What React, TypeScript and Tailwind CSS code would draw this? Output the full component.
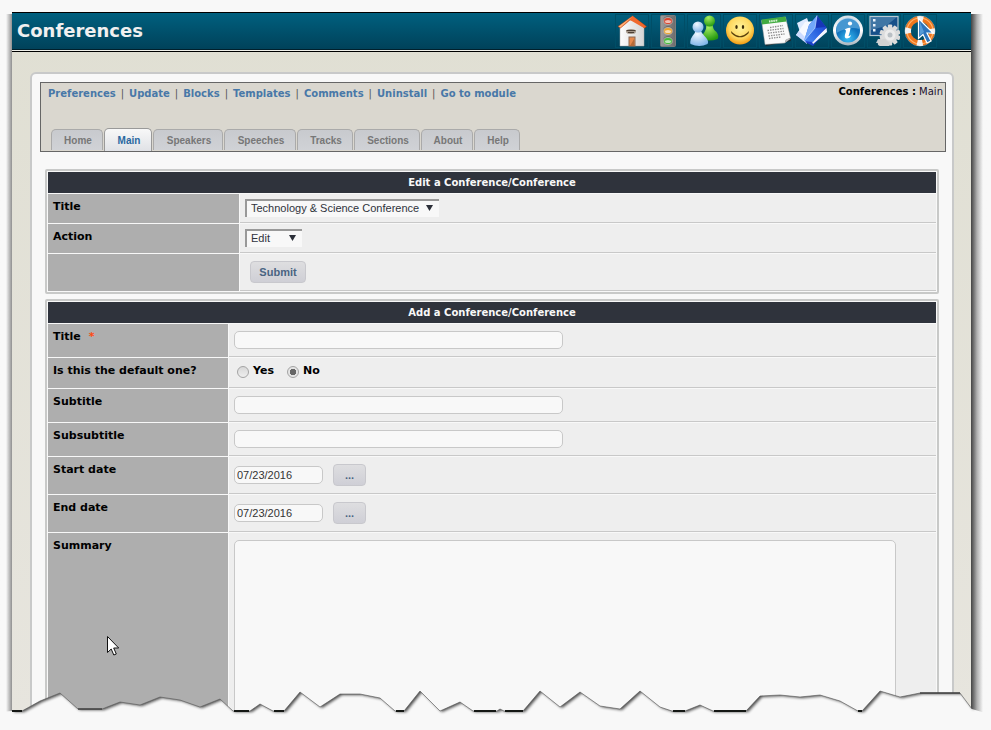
import React from "react";

const tabs = [
  ["Home", "w-[52px]"],
  ["Main", "w-[48px]"],
  ["Speakers", "w-[70px]"],
  ["Speeches", "w-[72px]"],
  ["Tracks", "w-[56px]"],
  ["Sections", "w-[66px]"],
  ["About", "w-[52px]"],
  ["Help", "w-[46px]"],
];
const adminLinks = ["Preferences", "Update", "Blocks", "Templates", "Comments", "Uninstall", "Go to module"];

function HomeIcon() {
  return (
    <svg width="32" height="32" viewBox="0 0 32 32">
      <defs>
        <linearGradient id="roof" x1="0" y1="0" x2="1" y2="1">
          <stop offset="0" stopColor="#ff9a55" />
          <stop offset=".5" stopColor="#ee5b1e" />
          <stop offset="1" stopColor="#c83c08" />
        </linearGradient>
        <linearGradient id="wall" x1="0" y1="0" x2="1" y2="0">
          <stop offset="0" stopColor="#fdfdfd" />
          <stop offset="1" stopColor="#d5d5d5" />
        </linearGradient>
      </defs>
      <path d="M4 12 14 3l14 9v19H4z" fill="url(#wall)" stroke="#aaa" strokeWidth=".5" />
      <path d="M16.500 1 2 11.500l2.500 1.500L14 5l4 0 10.500 8 2-1.500z" fill="url(#roof)" stroke="#b8400f" strokeWidth=".5" />
      <path d="M16.500 1 14 5l14 8 2-1.500z" fill="#f0692d" />
      <path d="M16.500 1.500 2.500 11.500l2 1z" fill="#ffb47c" />
      <ellipse cx="15" cy="16.500" rx="5" ry="2.500" fill="#a49789" />
      <path d="M10.500 15.500h9M12 17.500h6" stroke="#4d4036" strokeWidth="1" />
      <rect x="13" y="22" width="6" height="9" fill="#e6894c" stroke="#8b6a55" />
      <path d="M14 31l4-7v7z" fill="#b56b38" />
    </svg>
  );
}

function TrafficIcon() {
  return (
    <svg width="32" height="32" viewBox="0 0 32 32">
      <defs>
        <linearGradient id="post">
          <stop offset="0" stopColor="#9c9c9c" />
          <stop offset=".5" stopColor="#868686" />
          <stop offset="1" stopColor="#6b6b6b" />
        </linearGradient>
      </defs>
      <rect x="8.500" y=".5" width="15" height="31" rx="1" fill="url(#post)" stroke="#7c7c7c" />
      {[
        ["#d9452c", 5.5],
        ["#eda32c", 15.5],
        ["#46bb38", 25.5],
      ].map(([c, y]) => (
        <g key={c}>
          <ellipse cx="16" cy={y} rx="4.800" ry="4.200" fill="#626262" />
          <ellipse cx="16" cy={Number(y) + 0.5} rx="4.300" ry="3.500" fill={c as string} stroke="#c9c9c9" strokeWidth=".7" />
          <ellipse cx="16" cy={Number(y) + 1} rx="3" ry="1.500" fill="#fff" opacity=".65" />
        </g>
      ))}
    </svg>
  );
}

function UsersIcon() {
  return (
    <svg width="32" height="32" viewBox="0 0 32 32">
      <defs>
        <radialGradient id="green" cx=".4" cy=".2" r=".8">
          <stop offset="0" stopColor="#a5ee62" />
          <stop offset="1" stopColor="#259a0f" />
        </radialGradient>
        <radialGradient id="blue" cx=".4" cy=".25" r=".8">
          <stop offset="0" stopColor="#f1f9ff" />
          <stop offset="1" stopColor="#7cb2e8" />
        </radialGradient>
      </defs>
      <path d="M18.500 9h6q0 5 4 8 3 4 1 7-8 3-16 0 0-4 3-7 2-3 2-8z" fill="url(#green)" />
      <circle cx="21.500" cy="6" r="5.500" fill="url(#green)" />
      <path d="M7.500 15h5q1 3 4 6 5 5 3 8-8 4-17 0-1-4 2-8 3-3 3-6z" fill="url(#blue)" />
      <circle cx="10" cy="12" r="5.500" fill="url(#blue)" />
    </svg>
  );
}

function SmileIcon() {
  return (
    <svg width="32" height="32" viewBox="0 0 32 32">
      <defs>
        <radialGradient id="face" cx=".5" cy=".4" r=".6">
          <stop offset="0" stopColor="#fff39b" />
          <stop offset=".65" stopColor="#fed85e" />
          <stop offset="1" stopColor="#f39a12" />
        </radialGradient>
      </defs>
      <circle cx="16" cy="15.500" r="14" fill="url(#face)" />
      <ellipse cx="12.500" cy="12" rx="1.200" ry="2" fill="#3c2c0a" />
      <ellipse cx="19" cy="12" rx="1.200" ry="2" fill="#3c2c0a" />
      <path d="M8 18q8 7.500 16 0M7.500 17l1.500 2M24.500 17 23 19" fill="none" stroke="#59400c" strokeWidth="1.100" strokeLinecap="round" />
    </svg>
  );
}

function CalendarIcon() {
  return (
    <svg width="32" height="32" viewBox="0 0 32 32">
      <path d="m3 9 3 22 25-5-3-16z" fill="#222" opacity=".8" />
      <path d="m1.500 5.500 24-3.500L30.500 23 26 25 25 28 5 29.500z" fill="#fafafa" stroke="#999" strokeWidth=".5" />
      <path d="m1.500 4.500 24-3 1 5-24.500 3z" fill="#42ab41" />
      <path d="M9 6.500l9-1.200" stroke="#d9f4d4" strokeWidth="2" strokeDasharray="1.500 .7" />
      <path d="M10 12.500l13-2M7.500 15.500l16-2M8 18.200l16-2M8.500 21l16-2M9 23.500l12-1.500" stroke="#8d8d8d" strokeWidth="1.300" strokeDasharray="1.500 1" />
      <path d="M25 28l1-4 5-.5z" fill="#bbb" />
    </svg>
  );
}

function BookIcon() {
  return (
    <svg width="32" height="32" viewBox="0 0 32 32">
      <defs>
        <linearGradient id="cover" x1="0" y1="1" x2="1" y2="0">
          <stop offset="0" stopColor="#4d8df5" />
          <stop offset=".5" stopColor="#2a62e0" />
          <stop offset="1" stopColor="#1a3fd0" />
        </linearGradient>
      </defs>
      <path d="M1 8 11 3l5 14-9 9z" fill="#dfeaff" />
      <path d="M0 20 9 7l9-1-8 21z" fill="#f6f9ff" />
      <path d="M0 20l3-4 8 8 0 5z" fill="#ccdcff" />
      <path d="M9 27 30 11l1 4-14 16z" fill="#1c3fc8" />
      <path d="M16 26.500 30.500 13l.5 4-14 12z" fill="#f4f6ff" />
      <path d="M8 26 13 10 21 .5 30 12 17 27z" fill="url(#cover)" />
      <path d="M21 .5 19 13l11-1z" fill="#1736b8" />
      <path d="M21 .5 13 10 8 26l11-13z" fill="#72a8fa" />
      <path d="M21 .5 19 13 8 26" fill="none" stroke="#c1d8ff" strokeWidth=".7" />
    </svg>
  );
}

function InfoIcon() {
  return (
    <svg width="32" height="32" viewBox="0 0 32 32">
      <defs>
        <linearGradient id="ring" x1="0" y1="0" x2="0" y2="1">
          <stop offset="0" stopColor="#d5dde4" />
          <stop offset=".5" stopColor="#ffffff" />
          <stop offset="1" stopColor="#a7b3bd" />
        </linearGradient>
        <radialGradient id="disc" cx=".5" cy=".85">
          <stop offset="0" stopColor="#39bdf4" />
          <stop offset="1" stopColor="#0e6fbb" />
        </radialGradient>
      </defs>
      <circle cx="16" cy="15.500" r="15" fill="url(#ring)" />
      <circle cx="16" cy="15.500" r="12" fill="url(#disc)" />
      <path d="M4.500 14a11.500 11.500 0 0 1 23 0q-11-3-23 4z" fill="#8fc8ee" opacity=".45" />
      <circle cx="18" cy="8.500" r="2.100" fill="#fff" />
      <path d="M12.500 14.500q4-2.500 6-1.500-.5 4-2 8 1 .5 2.500-1-.5 3-4 3.500-3 0-2-4 1.500-4 .5-4.500z" fill="#fff" />
    </svg>
  );
}

function SystemIcon() {
  const teeth = [0, 36, 72, 108, 144, 180, 216, 252, 288, 324];
  return (
    <svg width="32" height="32" viewBox="0 0 32 32">
      <path d="M10 24h7l2 4H8z" fill="#c5ccd1" />
      <rect x="2" y="1.500" width="28" height="19" fill="#17508a" stroke="#b8c8d2" strokeWidth="1.200" />
      <path d="M3 2h26L18 11 3 15z" fill="#5c90b8" opacity=".6" />
      <path d="M5 4h2.500v2.500H5zM5 9h2.500v2.500H5zM5 14h2.500v2.500H5z" fill="#e9f2fb" />
      <g fill="#dcdcdc">
        {teeth.map((a) => (
          <rect key={a} x="19.800" y="9.500" width="4.400" height="5" rx="1" transform={`rotate(${a} 22 20)`} />
        ))}
        <circle cx="22" cy="20" r="8" />
      </g>
      <circle cx="22" cy="20" r="5.500" fill="#ececec" />
      <circle cx="22" cy="20" r="2.500" fill="#b9bfc4" />
      <path d="M10 27q1-4 4-2 3-3 5 1 4 1 2 5h-9q-3-1-2-4z" fill="#d2d2d2" />
    </svg>
  );
}

function HelpIcon() {
  return (
    <svg width="32" height="32" viewBox="0 0 32 32">
      <circle cx="16" cy="16" r="15" fill="none" stroke="#93a9b2" strokeWidth=".7" />
      <circle cx="16" cy="16" r="12" fill="none" stroke="#ef761d" strokeWidth="5.500" />
      <circle cx="16" cy="16" r="13" fill="none" stroke="#ffb26a" strokeWidth="1.200" />
      <circle cx="16" cy="16" r="12" fill="none" stroke="#eff2f4" strokeWidth="6" strokeDasharray="5.500 13.350" strokeDashoffset="2.750" />
      <path d="M14.500 3.500v20l4.500-4 4 8.500 4-2-4-8h6z" fill="#2d74bd" stroke="#fff" strokeWidth="1.200" />
      <path d="M16 7v13l4-3z" fill="#72b5e8" opacity=".6" />
    </svg>
  );
}

const toolbar = [
  ["Home page", HomeIcon],
  ["Status", TrafficIcon],
  ["Users", UsersIcon],
  ["Smilies", SmileIcon],
  ["Calendar", CalendarIcon],
  ["Documents", BookIcon],
  ["Information", InfoIcon],
  ["System", SystemIcon],
  ["Help", HelpIcon],
] as const;

const tear =
  "12,26 22,26 40,16 60,8 78,24 102,24 120,17 140,20 160,12 180,15 200,22 220,14 233,26 250,26 260,19 273,26 284,26 300,7 320,22 340,9 360,9 380,13 395,26 404,26 420,6 440,26 460,17 473,26 497,26 500,24 504,26 523,26 540,6 560,22 580,7 600,21 620,24 640,6 660,22 672,26 685,26 700,20 713,26 746,26 760,11 780,10 800,12 820,10 840,16 858,26 862,26 880,6 900,12 920,8 960,8 972,24";

function TornEdge() {
  return (
    <svg className="pointer-events-none absolute top-[685px] left-0 h-[45px] w-full" viewBox="0 0 991 45" preserveAspectRatio="none" aria-hidden="true">
      <defs>
        <clipPath id="below">
          <polygon points={`0,26 ${tear} 980,26 991,26 991,45 0,45`} />
        </clipPath>
        <filter id="soft" x="-5%" y="-50%" width="110%" height="200%">
          <feGaussianBlur stdDeviation="1.500" />
        </filter>
      </defs>
      <polygon points={`0,27 ${tear} 982,27 991,27 991,45 0,45`} fill="#f8f8f8" />
      <g clipPath="url(#below)">
        <polygon points={`12,-10 ${tear} 972,-10`} fill="#000" opacity=".7" filter="url(#soft)" transform="translate(2 1)" />
      </g>
      <polyline points={tear} fill="none" stroke="#555" strokeOpacity=".6" strokeWidth="1" />
      <path d="M12 26h10M234 26h15M274 26h10M396 26h8M474 26h22M505 26h18M673 26h12M714 26h32M858 26h4" stroke="#151815" strokeWidth="2" />
      <path d="M78 24h24M920 8h40" stroke="#444" strokeWidth="1.500" />
    </svg>
  );
}

const button =
  "h-[22px] rounded border border-[#c8c8cd] bg-linear-to-b from-[#dedee0] to-[#cfcfd6] font-['Liberation_Sans',Arial,sans-serif] text-[11px] font-bold text-[#4a6482]";
const field =
  "block h-[18px] rounded-[5px] border border-[#c8c8c8] bg-[#f8f8f8] px-[2px] font-['Liberation_Sans',Arial,sans-serif] text-[11px] text-[#333]";

function FormTable({ title, labelWidth, children }: { title: string; labelWidth: string; children: React.ReactNode }) {
  return (
    <table className="w-full table-fixed border-separate border-spacing-px rounded-[2px] border-2 border-[#c8c9c8]">
      <colgroup>
        <col className={labelWidth} />
        <col />
      </colgroup>
      <thead>
        <tr>
          <th colSpan={2} className="h-[21px] bg-[#2f333c] p-0 text-center text-[10px] leading-[14px] font-bold text-[#f8f8f8]">
            {title}
          </th>
        </tr>
      </thead>
      <tbody>{children}</tbody>
    </table>
  );
}

function Row({ label, htmlFor, required, height, top, children }: { label?: string; htmlFor?: string; required?: boolean; height: string; top: string; children: React.ReactNode }) {
  return (
    <tr className={height}>
      <th className="bg-[#aeaeae] px-[5px] pt-[6px] pb-0 text-left align-top leading-[14px] font-bold text-black">
        {label && (
          <label htmlFor={htmlFor}>
            {label}
            {required && <span className="ml-2 text-[#ff4a10]">*</span>}
          </label>
        )}
      </th>
      <td className={`border-b border-[#c8c8c8] bg-[#eee] px-[5px] pb-0 align-top ${top}`}>{children}</td>
    </tr>
  );
}

function Select({ id, options, width }: { id: string; options: string[]; width: string }) {
  return (
    <div className={`relative ${width}`}>
      <select id={id} className="block h-[18px] w-full appearance-none border-t-2 border-l-2 border-[#999] bg-[#f8f8f8] pb-[2px] pl-1 font-['Liberation_Sans',Arial,sans-serif] text-[11px] leading-[14px] text-[#2f333c]">
        {options.map((o) => (
          <option key={o}>{o}</option>
        ))}
      </select>
      <svg className="pointer-events-none absolute top-[6px] right-[6px]" width="7" height="6" viewBox="0 0 7 6" aria-hidden="true">
        <path d="M0 0h7L3.500 6z" fill="#2b2f38" />
      </svg>
    </div>
  );
}

function Radio({ id, label, checked }: { id: string; label: string; checked?: boolean }) {
  return (
    <span className="flex items-center gap-1">
      <input
        id={id}
        type="radio"
        name="isdefault"
        defaultChecked={checked}
        className="mt-[3px] h-3 w-3 appearance-none rounded-full border border-[#a4a4a4] bg-linear-to-b from-[#d8d8d8] to-[#eee] checked:bg-[radial-gradient(circle,#666_0_3px,#e4e4e4_3px)]"
      />
      <label htmlFor={id} className="leading-[14px] font-bold text-black">{label}</label>
    </span>
  );
}

function DateField({ id }: { id: string }) {
  return (
    <div className="flex items-center gap-[10px]">
      <input id={id} type="text" defaultValue="07/23/2016" className={`${field} w-[89px]`} />
      <button type="button" className={`${button} w-[33px]`}>...</button>
    </div>
  );
}

export default function App() {
  return (
    <div className="relative h-screen max-h-[730px] overflow-hidden bg-[#f8f8f8] pt-3 font-['DejaVu_Sans',Verdana,sans-serif] text-[11px]">
      <div className="flex h-[700px]">
        <div className="mt-[2px] w-3 shrink-0 bg-linear-to-r from-[#f8f8f8] from-50% to-[#909090]" />
        <div className="min-w-0 flex-1 bg-linear-to-b from-[#e0dfd3] to-[#e7e5de]">
          <header className="flex h-[38px] items-center justify-between border-y border-t-black border-b-[#00202c] bg-linear-to-b from-[#00607f] to-[#00425a] pr-[34px] pl-[5px]">
            <h1 className="text-[18px] leading-6 font-bold text-[#f0f0f0]">Conferences</h1>
            <nav className="flex gap-[2px]">
              {toolbar.map(([label, Icon]) => (
                <a key={label} href="#" aria-label={label} className="border border-[#004e67]">
                  <Icon />
                </a>
              ))}
            </nav>
          </header>
          <div className="h-[2px] border-b border-black bg-[#f0f0ea]" />
          <main className="mt-5 mr-[17px] ml-[18px] rounded-md border-2 border-[#c8c9c9] bg-[#f8f8f8] pt-2">
            <div className="mr-[6px] ml-2 flex h-[70px] flex-col justify-between border border-[#666] bg-[#dad7cf]">
              <div className="flex justify-between pt-[2px] pr-[2px] pl-[7px] text-[10px] leading-[14px]">
                <div className="flex gap-[5px] pt-[2px] font-bold text-[#4878a8]">
                  {adminLinks.map((link, i) => (
                    <React.Fragment key={link}>
                      {i > 0 && <span className="font-normal text-[#555]">|</span>}
                      <a href="#">{link}</a>
                    </React.Fragment>
                  ))}
                </div>
                <div className="text-[#201030]">
                  <b className="text-black">Conferences :</b> Main
                </div>
              </div>
              <nav className="flex items-end gap-px pl-[10px] text-center font-['Liberation_Sans',Arial,sans-serif] text-[10px] font-bold">
                {tabs.map(([tab, width]) =>
                  tab === "Main" ? (
                    <a key={tab} href="#" className={`${width} h-[23px] rounded-t-[5px] border border-b-0 border-[#999] bg-linear-to-b from-[#f8f8f8] to-[#e0e2e6] pl-[2px] leading-[24px] text-[#2a68a0]`}>{tab}</a>
                  ) : (
                    <a key={tab} href="#" className={`${width} mb-px h-[21px] rounded-t-[5px] border border-b-0 border-[#aaa] bg-linear-to-b from-[#c8cace] to-[#d0d2d6] pl-[2px] leading-[22px] text-[#777]`}>{tab}</a>
                  )
                )}
              </nav>
            </div>
            <div className="mx-[13px] mt-[17px] flex flex-col gap-[5px]">
              <FormTable title="Edit a Conference/Conference" labelWidth="w-[191px]">
                <Row label="Title" htmlFor="conference" height="h-[29px]" top="pt-[5px]">
                  <Select id="conference" width="w-[194px]" options={["Technology & Science Conference"]} />
                </Row>
                <Row label="Action" htmlFor="action" height="h-[29px]" top="pt-[5px]">
                  <Select id="action" width="w-[57px]" options={["Edit", "Delete"]} />
                </Row>
                <Row height="h-[37px]" top="pt-[7px]">
                  <button type="submit" className={`${button} ml-[5px] block w-14`}>Submit</button>
                </Row>
              </FormTable>
              <FormTable title="Add a Conference/Conference" labelWidth="w-[180px]">
                <Row label="Title" htmlFor="title" required height="h-[33px]" top="pt-[7px]">
                  <input id="title" type="text" className={`${field} w-[329px]`} />
                </Row>
                <Row label="Is this the default one?" htmlFor="default-no" height="h-[30px]" top="pt-[5px]">
                  <div className="flex gap-[13px] pl-[3px]">
                    <Radio id="default-yes" label="Yes" />
                    <Radio id="default-no" label="No" checked />
                  </div>
                </Row>
                <Row label="Subtitle" htmlFor="subtitle" height="h-[33px]" top="pt-[7px]">
                  <input id="subtitle" type="text" className={`${field} w-[329px]`} />
                </Row>
                <Row label="Subsubtitle" htmlFor="subsubtitle" height="h-[33px]" top="pt-[7px]">
                  <input id="subsubtitle" type="text" className={`${field} w-[329px]`} />
                </Row>
                <Row label="Start date" htmlFor="start" height="h-[37px]" top="pt-[7px]">
                  <DateField id="start" />
                </Row>
                <Row label="End date" htmlFor="end" height="h-[37px]" top="pt-[7px]">
                  <DateField id="end" />
                </Row>
                <Row label="Summary" htmlFor="summary" height="h-[220px]" top="pt-[7px]">
                  <textarea id="summary" className="block h-[205px] w-full max-w-[662px] resize-none rounded-[5px] border border-[#c8c8c8] bg-[#f8f8f8] p-1" />
                </Row>
              </FormTable>
            </div>
          </main>
        </div>
        <div className="mt-[2px] w-5 shrink-0 bg-linear-to-r from-[#444] via-[#b0b0b0] via-30% to-[#f8f8f8] to-60%" />
      </div>
      <TornEdge />
      <svg className="pointer-events-none absolute top-[636px] left-[107px]" width="12" height="20" viewBox="0 0 12 20" aria-hidden="true">
        <path d="M.5.5v16l3.700-3.500 2.600 6 2.500-1-2.600-6h5z" fill="#fff" stroke="#111" />
      </svg>
    </div>
  );
}
